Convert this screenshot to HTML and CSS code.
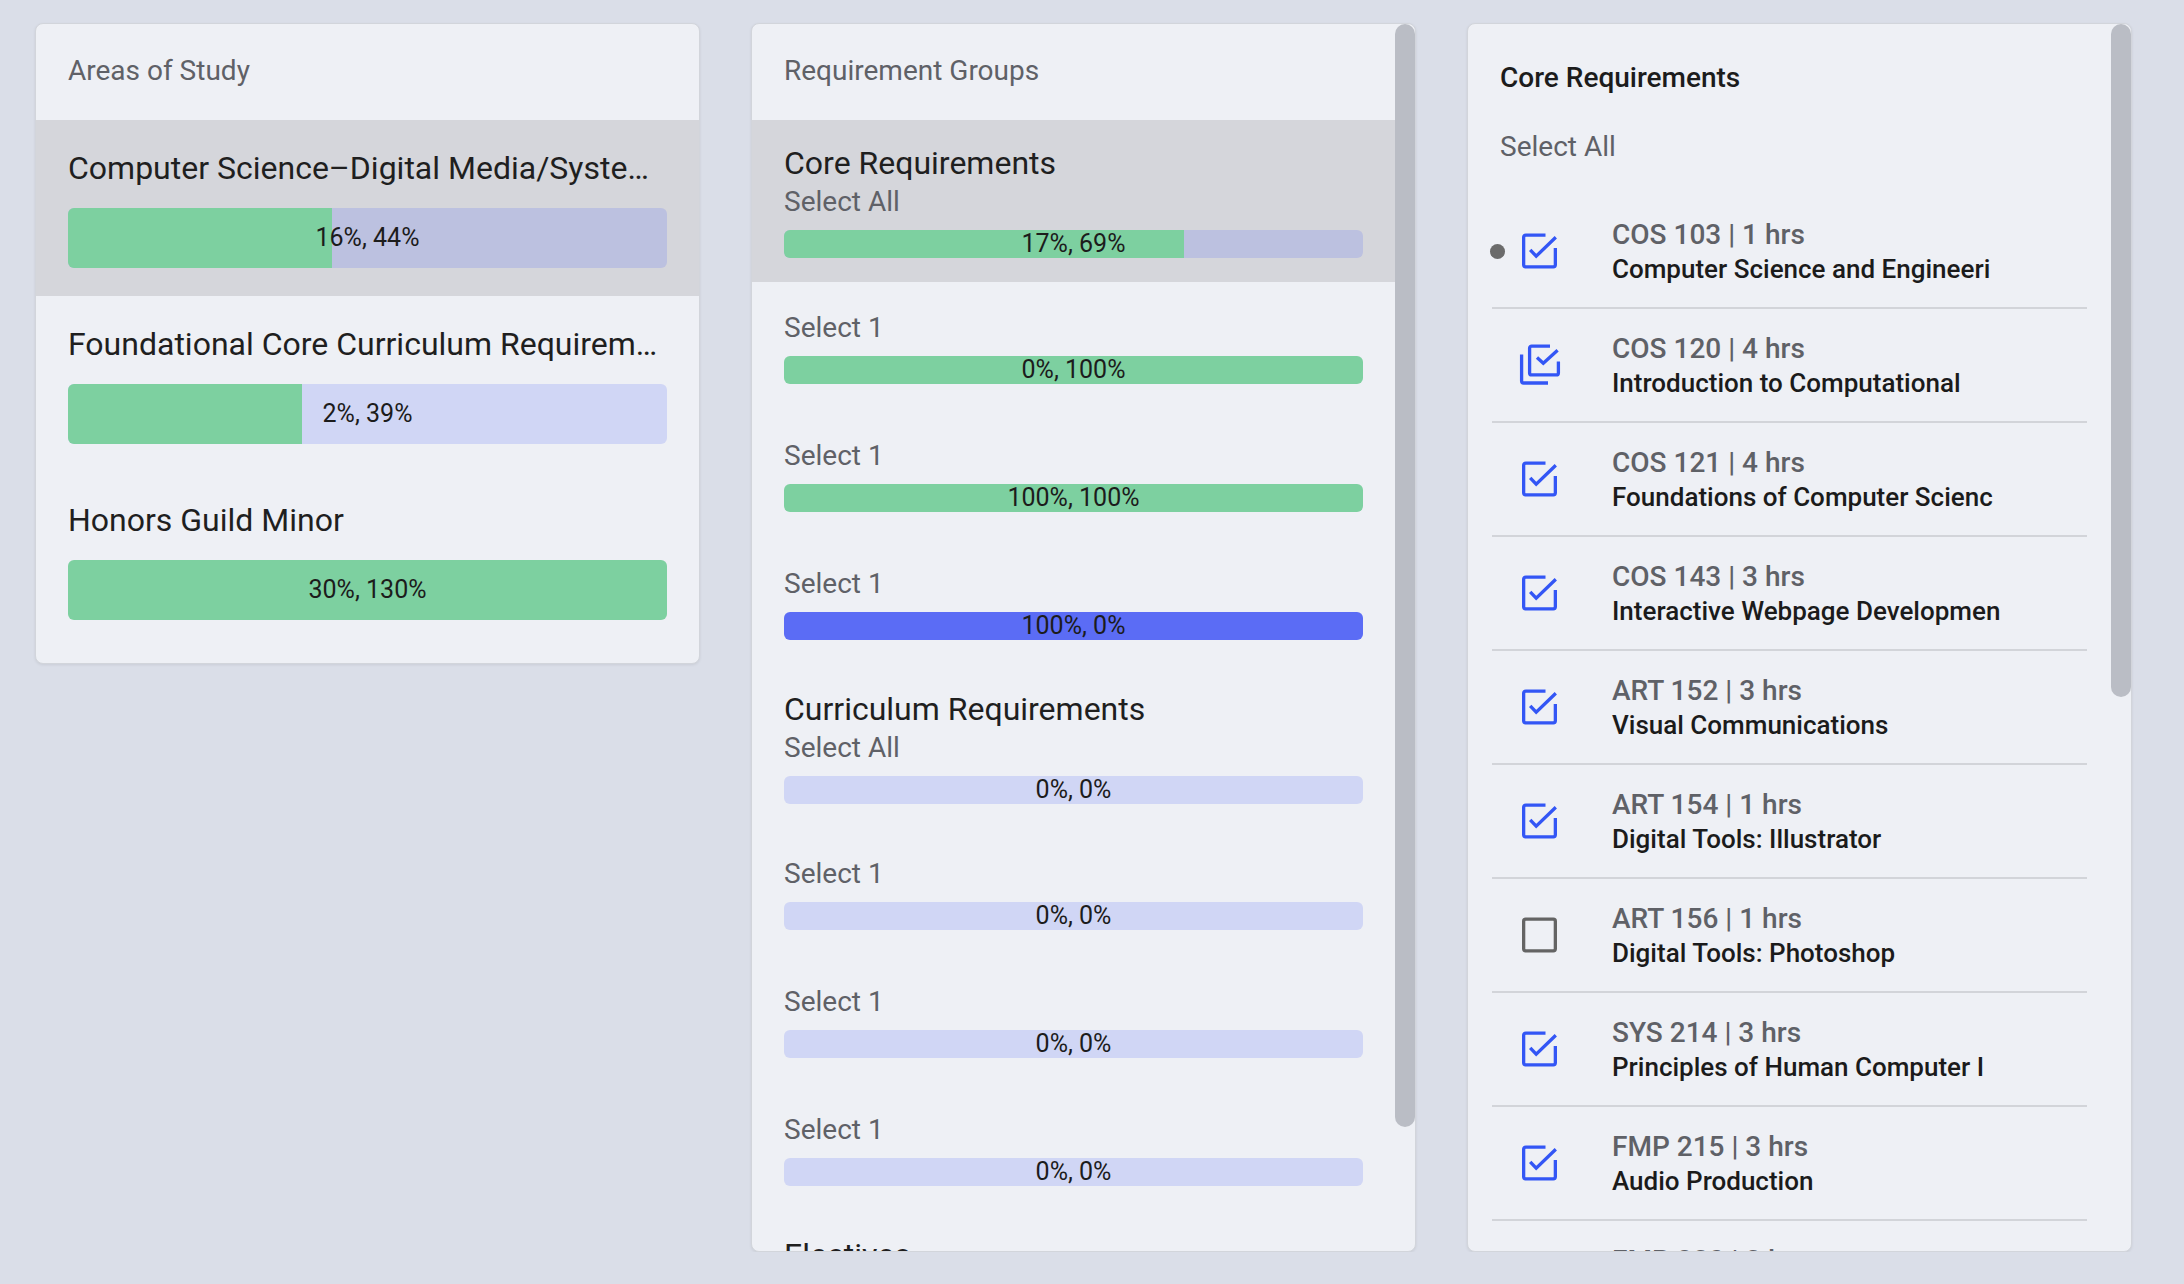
FILE: index.html
```html
<!DOCTYPE html>
<html lang="en">
<head>
<meta charset="utf-8">
<title>Degree Progress</title>
<link rel="stylesheet" href="styles.css">
</head>
<body>
<main class="board">

  <section class="panel areas">
    <div class="panel-header">Areas of Study</div>
    <div class="area selected">
      <div class="area-title">Computer Science–Digital Media/Systems Emphasis</div>
      <div class="bar big"><div class="fill green" style="width:44%"></div><span class="bar-label">16%, 44%</span></div>
    </div>
    <div class="area">
      <div class="area-title">Foundational Core Curriculum Requirements</div>
      <div class="bar big"><div class="fill green" style="width:39%"></div><span class="bar-label">2%, 39%</span></div>
    </div>
    <div class="area">
      <div class="area-title">Honors Guild Minor</div>
      <div class="bar big"><div class="fill green" style="width:100%"></div><span class="bar-label">30%, 130%</span></div>
    </div>
  </section>

  <section class="panel scroll groups">
    <div class="scroll-body">
      <div class="panel-header">Requirement Groups</div>
      <div class="group selected">
        <div class="group-title">Core Requirements</div>
        <div class="sel-label">Select All</div>
        <div class="bar small"><div class="fill green" style="width:69%"></div><span class="bar-label">17%, 69%</span></div>
      </div>
      <div class="subgroup">
        <div class="sel-label">Select 1</div>
        <div class="bar small"><div class="fill green" style="width:100%"></div><span class="bar-label">0%, 100%</span></div>
      </div>
      <div class="subgroup">
        <div class="sel-label">Select 1</div>
        <div class="bar small"><div class="fill green" style="width:100%"></div><span class="bar-label">100%, 100%</span></div>
      </div>
      <div class="subgroup">
        <div class="sel-label">Select 1</div>
        <div class="bar small"><div class="fill blue" style="width:100%"></div><span class="bar-label">100%, 0%</span></div>
      </div>
      <div class="group">
        <div class="group-title">Curriculum Requirements</div>
        <div class="sel-label">Select All</div>
        <div class="bar small"><div class="fill green" style="width:0%"></div><span class="bar-label">0%, 0%</span></div>
      </div>
      <div class="subgroup">
        <div class="sel-label">Select 1</div>
        <div class="bar small"><div class="fill green" style="width:0%"></div><span class="bar-label">0%, 0%</span></div>
      </div>
      <div class="subgroup">
        <div class="sel-label">Select 1</div>
        <div class="bar small"><div class="fill green" style="width:0%"></div><span class="bar-label">0%, 0%</span></div>
      </div>
      <div class="subgroup">
        <div class="sel-label">Select 1</div>
        <div class="bar small"><div class="fill green" style="width:0%"></div><span class="bar-label">0%, 0%</span></div>
      </div>
      <div class="group">
        <div class="group-title">Electives</div>
        <div class="sel-label">Select All</div>
        <div class="bar small"><div class="fill green" style="width:0%"></div><span class="bar-label">0%, 0%</span></div>
      </div>
    </div>
    <div class="scrollbar"><div class="thumb" style="height:1103px"></div></div>
  </section>

  <section class="panel scroll courses">
    <div class="scroll-body">
      <div class="course-head">
        <div class="course-head-title">Core Requirements</div>
        <div class="course-head-sel">Select All</div>
      </div>
      <ul class="course-list">
        <li class="course">
          <span class="marker on"></span>
          <svg class="cb checked" viewBox="0 0 42 42"><path d="M26.5 5.15H6.65a2 2 0 0 0-2 2v27.7a2 2 0 0 0 2 2h27.7a2 2 0 0 0 2-2V18"/><path d="M11.2 19.8l6 6.4L36.8 7.2"/></svg>
          <div class="course-text"><div class="course-code">COS 103 | 1 hrs</div><div class="course-name">Computer Science and Engineeri</div></div>
        </li>
        <li class="course">
          <span class="marker"></span>
          <svg class="cb checked" viewBox="0 0 42 42"><path d="M31 2.1H12.6a2 2 0 0 0-2 2v24.8a2 2 0 0 0 2 2h24.8a2 2 0 0 0 2-2V17.5"/><path d="M18 13.5l6.3 5.8L38.6 6.2"/><path d="M2.6 10.5V37a2 2 0 0 0 2 2H29"/></svg>
          <div class="course-text"><div class="course-code">COS 120 | 4 hrs</div><div class="course-name">Introduction to Computational</div></div>
        </li>
        <li class="course">
          <span class="marker"></span>
          <svg class="cb checked" viewBox="0 0 42 42"><path d="M26.5 5.15H6.65a2 2 0 0 0-2 2v27.7a2 2 0 0 0 2 2h27.7a2 2 0 0 0 2-2V18"/><path d="M11.2 19.8l6 6.4L36.8 7.2"/></svg>
          <div class="course-text"><div class="course-code">COS 121 | 4 hrs</div><div class="course-name">Foundations of Computer Scienc</div></div>
        </li>
        <li class="course">
          <span class="marker"></span>
          <svg class="cb checked" viewBox="0 0 42 42"><path d="M26.5 5.15H6.65a2 2 0 0 0-2 2v27.7a2 2 0 0 0 2 2h27.7a2 2 0 0 0 2-2V18"/><path d="M11.2 19.8l6 6.4L36.8 7.2"/></svg>
          <div class="course-text"><div class="course-code">COS 143 | 3 hrs</div><div class="course-name">Interactive Webpage Developmen</div></div>
        </li>
        <li class="course">
          <span class="marker"></span>
          <svg class="cb checked" viewBox="0 0 42 42"><path d="M26.5 5.15H6.65a2 2 0 0 0-2 2v27.7a2 2 0 0 0 2 2h27.7a2 2 0 0 0 2-2V18"/><path d="M11.2 19.8l6 6.4L36.8 7.2"/></svg>
          <div class="course-text"><div class="course-code">ART 152 | 3 hrs</div><div class="course-name">Visual Communications</div></div>
        </li>
        <li class="course">
          <span class="marker"></span>
          <svg class="cb checked" viewBox="0 0 42 42"><path d="M26.5 5.15H6.65a2 2 0 0 0-2 2v27.7a2 2 0 0 0 2 2h27.7a2 2 0 0 0 2-2V18"/><path d="M11.2 19.8l6 6.4L36.8 7.2"/></svg>
          <div class="course-text"><div class="course-code">ART 154 | 1 hrs</div><div class="course-name">Digital Tools: Illustrator</div></div>
        </li>
        <li class="course">
          <span class="marker"></span>
          <svg class="cb empty" viewBox="0 0 42 42"><rect x="4.65" y="5.15" width="31.7" height="31.7" rx="2"/></svg>
          <div class="course-text"><div class="course-code">ART 156 | 1 hrs</div><div class="course-name">Digital Tools: Photoshop</div></div>
        </li>
        <li class="course">
          <span class="marker"></span>
          <svg class="cb checked" viewBox="0 0 42 42"><path d="M26.5 5.15H6.65a2 2 0 0 0-2 2v27.7a2 2 0 0 0 2 2h27.7a2 2 0 0 0 2-2V18"/><path d="M11.2 19.8l6 6.4L36.8 7.2"/></svg>
          <div class="course-text"><div class="course-code">SYS 214 | 3 hrs</div><div class="course-name">Principles of Human Computer I</div></div>
        </li>
        <li class="course">
          <span class="marker"></span>
          <svg class="cb checked" viewBox="0 0 42 42"><path d="M26.5 5.15H6.65a2 2 0 0 0-2 2v27.7a2 2 0 0 0 2 2h27.7a2 2 0 0 0 2-2V18"/><path d="M11.2 19.8l6 6.4L36.8 7.2"/></svg>
          <div class="course-text"><div class="course-code">FMP 215 | 3 hrs</div><div class="course-name">Audio Production</div></div>
        </li>
        <li class="course">
          <span class="marker"></span>
          <svg class="cb checked" viewBox="0 0 42 42"><path d="M26.5 5.15H6.65a2 2 0 0 0-2 2v27.7a2 2 0 0 0 2 2h27.7a2 2 0 0 0 2-2V18"/><path d="M11.2 19.8l6 6.4L36.8 7.2"/></svg>
          <div class="course-text"><div class="course-code">FMP 230 | 3 hrs</div><div class="course-name">Video Production</div></div>
        </li>
      </ul>
    </div>
    <div class="scrollbar"><div class="thumb" style="height:673px"></div></div>
  </section>

</main>
</body>
</html>
```

FILE: styles.css
```css
html, body {
  margin: 0;
  padding: 0;
}

body {
  background: #dadee8;
  font-family: Roboto, "Noto Sans", "Liberation Sans", sans-serif;
  color: #1f1f1f;
}

.board {
  display: grid;
  grid-template-columns: repeat(3, 665px);
  column-gap: 51px;
  align-items: start;
  padding: 23px 0 0 35px;
}

.panel {
  box-sizing: border-box;
  background: #eef0f5;
  border: 1px solid #d2d5db;
  border-radius: 8px;
  box-shadow: 0 1px 3px rgba(0, 0, 0, 0.08);
  padding-bottom: 15px;
}

.panel.scroll {
  display: flex;
  height: 1229px;
  padding-bottom: 0;
  overflow: hidden;
}

.scroll-body {
  flex: 1;
  min-width: 0;
  overflow: hidden;
}

.scrollbar {
  flex: none;
  width: 20px;
}

.thumb {
  background: #babdc5;
  border-radius: 10px;
}

.panel-header {
  padding: 31px 32px 33px;
  font-size: 28px;
  line-height: 32px;
  color: #5f6167;
}

/* progress bars */
.bar {
  display: grid;
  overflow: hidden;
  background: rgba(91, 108, 245, 0.2);
}

.bar > * {
  grid-area: 1 / 1;
}

.bar.big {
  height: 60px;
  margin-top: 22px;
  border-radius: 6px;
}

.bar.small {
  height: 28px;
  margin-top: 12px;
  border-radius: 6px;
}

.fill {
  justify-self: start;
  height: 100%;
}

.fill.green {
  background: #7dd0a0;
}

.fill.blue {
  background: #5b6cf5;
}

.bar-label {
  align-self: center;
  justify-self: center;
  font-size: 25px;
  line-height: 28px;
  color: #1c1c1c;
}

/* areas of study */
.area {
  padding: 30px 32px 28px;
}

.area.selected,
.group.selected {
  background: #d5d6db;
}

.area-title {
  font-size: 32px;
  line-height: 36px;
  color: #1f1f1f;
  white-space: nowrap;
  overflow: hidden;
  text-overflow: ellipsis;
}

/* requirement groups */
.group {
  padding: 24px 32px 24px;
}

.subgroup {
  padding: 30px 32px 26px;
}

.group-title {
  font-size: 32px;
  line-height: 38px;
  color: #1f1f1f;
}

.sel-label {
  margin-top: 4px;
  font-size: 28px;
  line-height: 32px;
  color: #5f6167;
}

.subgroup .sel-label {
  margin-top: 0;
}

/* courses */
.course-head {
  padding: 37px 32px 31px;
}

.course-head-title {
  font-size: 28px;
  line-height: 34px;
  font-weight: 500;
  color: #1c1c1c;
}

.course-head-sel {
  margin-top: 35px;
  font-size: 28px;
  line-height: 34px;
  color: #5f6167;
}

.course-list {
  list-style: none;
  margin: 0 24px;
  padding: 0;
}

.course {
  display: flex;
  align-items: center;
  padding: 22px 0;
  border-bottom: 2px solid #d2d4d9;
}

.marker {
  flex: none;
  width: 15px;
  height: 15px;
  margin-left: -2px;
  border-radius: 50%;
}

.marker.on {
  background: #6b6b6b;
}

.cb {
  flex: none;
  width: 42px;
  height: 42px;
  margin-left: 14px;
  fill: none;
  stroke-width: 3.3;
  stroke-linejoin: miter;
}

.cb.checked {
  stroke: #3356f5;
}

.cb.empty {
  stroke: #646464;
}

.course-text {
  margin-left: 51px;
  white-space: nowrap;
}

.course-code {
  font-size: 28px;
  line-height: 36px;
  font-weight: 500;
  color: #5f6167;
}

.course-name {
  font-size: 26px;
  line-height: 32px;
  font-weight: 500;
  color: #1b1b1b;
}
```
